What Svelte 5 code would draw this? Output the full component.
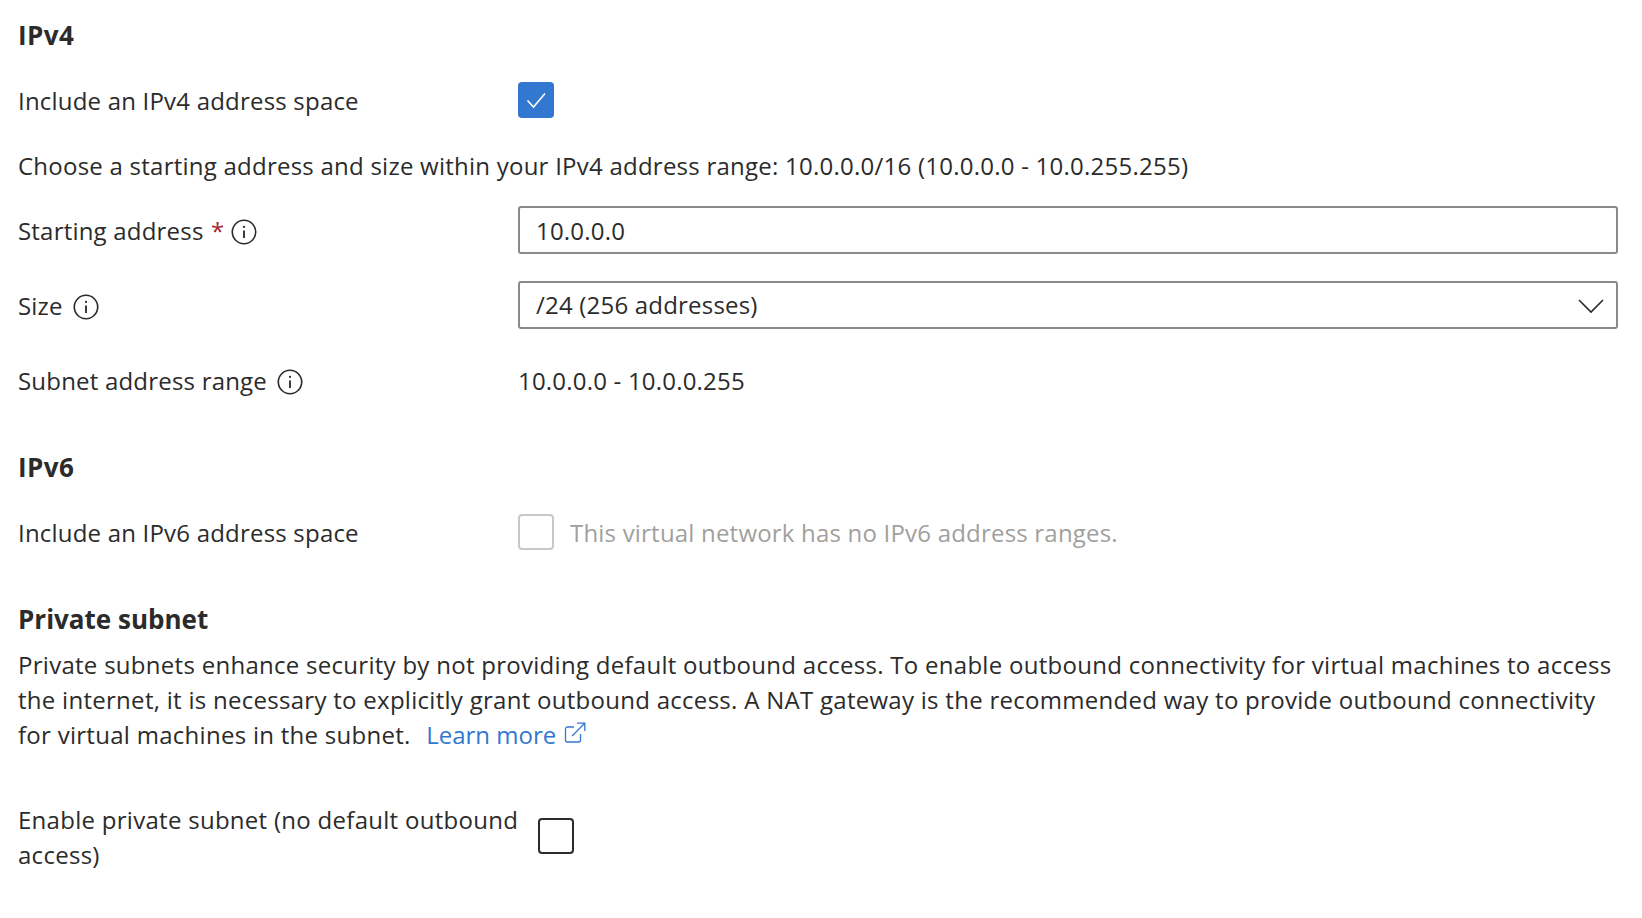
<script>
  const info = "M12 1.2a10.8 10.8 0 1 0 0 21.6a10.8 10.8 0 0 0 0-21.6z";
</script>

{#snippet infoIcon()}
  <svg class="info" viewBox="0 0 24 24" width="26" height="26" fill="none" stroke="#2b2b2b">
    <path d={info} stroke-width="1.5" />
    <path d="M12 10.5v7" stroke-width="1.7" />
    <circle cx="12" cy="7.3" r="1" fill="#2b2b2b" stroke="none" />
  </svg>
{/snippet}

<main class="page">
  <h2 class="first">IPv4</h2>
  <div class="row check-row">
    <span class="label">Include an IPv4 address space</span>
    <span class="box checked">
      <svg viewBox="0 0 36 36" width="36" height="36" fill="none" stroke="#fff" stroke-width="1.6">
        <path d="M9.5 18.5l6 6.5L27 11.5" />
      </svg>
    </span>
  </div>
  <p class="choose">Choose a starting address and size within your IPv4 address range: 10.0.0.0/16 (10.0.0.0 - 10.0.255.255)</p>
  <div class="row field-row">
    <span class="label">Starting address <span class="req">*</span>{@render infoIcon()}</span>
    <div class="input">10.0.0.0</div>
  </div>
  <div class="row field-row">
    <span class="label">Size{@render infoIcon()}</span>
    <div class="input select">
      <span>/24 (256 addresses)</span>
      <svg viewBox="0 0 26 16" width="26" height="16" fill="none" stroke="#2b2b2b" stroke-width="1.6">
        <path d="M1 2l12 12L25 2" />
      </svg>
    </div>
  </div>
  <div class="row range-row">
    <span class="label">Subnet address range{@render infoIcon()}</span>
    <span>10.0.0.0 - 10.0.0.255</span>
  </div>

  <h2 class="v6">IPv6</h2>
  <div class="row check-row">
    <span class="label">Include an IPv6 address space</span>
    <span class="box disabled"></span>
    <span class="muted">This virtual network has no IPv6 address ranges.</span>
  </div>

  <h2 class="private">Private subnet</h2>
  <p class="para">
    Private subnets enhance security by not providing default outbound access. To enable outbound connectivity for virtual machines to access the internet, it is necessary to explicitly grant outbound access. A NAT gateway is the recommended way to provide outbound connectivity for virtual machines in the subnet.
    <a href="#learn" class="link">Learn more<svg viewBox="0 0 22 22" width="22" height="22" fill="none" stroke="#3277d0" stroke-width="1.3">
        <path d="M10 5H3.500A2 2 0 0 0 1.500 7v11a2 2 0 0 0 2 2h11a2 2 0 0 0 2-2v-6" />
        <path d="M8 14L20.500 1.500M13 1.200h7.800V9" />
      </svg></a>
  </p>
  <div class="row enable-row">
    <span class="enable-label">Enable private subnet (no default outbound access)</span>
    <span class="box plain"></span>
  </div>
</main>

<style>
  :global(body) {
    margin: 0;
    background: #fff;
  }

  .page {
    box-sizing: border-box;
    width: 1642px;
    height: 918px;
    overflow: hidden;
    padding: 17px 24px 0 18px;
    font-family: "Open Sans", "Noto Sans", sans-serif;
    font-size: 24px;
    line-height: 35px;
    letter-spacing: 0.2px;
    color: #2b2b2b;
  }

  h2 {
    margin: 0;
    font-size: 26px;
    font-weight: 700;
    line-height: 36px;
    letter-spacing: 0;
  }

  .first, .v6 {
    letter-spacing: 0.4px;
  }

  p {
    margin: 0;
  }

  .row {
    display: flex;
    align-items: center;
  }

  .label {
    display: flex;
    align-items: center;
    flex: 0 0 500px;
    white-space: pre;
  }

  .req {
    color: #a4262c;
    margin: 0 -3px 0 1px;
  }

  .info {
    margin-left: 10px;
    margin-top: 3px;
  }

  .check-row {
    height: 36px;
  }

  .first + .check-row {
    margin-top: 29px;
  }

  .box {
    box-sizing: border-box;
    flex: none;
    width: 36px;
    height: 36px;
    border-radius: 4px;
    display: block;
  }

  .checked {
    background: #3277d0;
  }

  .checked svg {
    display: block;
  }

  .disabled {
    border: 2px solid #c8c8c8;
  }

  .plain {
    border: 2px solid #2b2b2b;
    margin: 0 0 2px 16px;
  }

  .muted {
    color: #a19f9d;
    margin-left: 16px;
  }

  .choose {
    margin-top: 30px;
    letter-spacing: 0.24px;
  }

  .field-row {
    height: 48px;
    margin-top: 27px;
  }

  .choose + .field-row {
    margin-top: 23px;
  }

  .input {
    box-sizing: border-box;
    flex: 1;
    height: 48px;
    border: 2px solid #8a8a8a;
    border-radius: 3px;
    padding: 0 16px;
    display: flex;
    align-items: center;
    justify-content: space-between;
  }

  .select span {
    margin-top: -2px;
  }

  .select svg {
    margin: 2px -4px 0 0;
  }

  .range-row {
    margin-top: 34px;
  }

  .v6 {
    margin-top: 51px;
  }

  .v6 + .check-row {
    margin-top: 29px;
  }

  .private {
    margin-top: 51px;
  }

  .para {
    margin-top: 10px;
    letter-spacing: 0.28px;
  }

  .link {
    color: #3277d0;
    text-decoration: none;
    margin-left: 9px;
    letter-spacing: 0;
  }

  .link svg {
    margin-left: 8px;
    vertical-align: 0;
  }

  .enable-row {
    margin-top: 50px;
  }

  .enable-label {
    width: 504px;
    letter-spacing: 0.28px;
  }
</style>
